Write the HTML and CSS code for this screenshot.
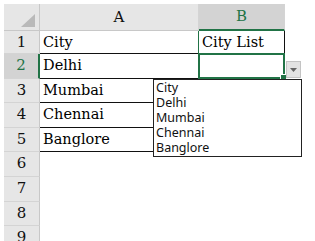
FILE: index.html
```html
<html>
<head>
  <link rel="stylesheet" href="styles.css">
</head>
<body>
<div class="sheet">
  <div class="corner">
    <svg width="14" height="13" viewBox="0 0 14 13"><polygon points="14,0 14,13 0,13" fill="#b9b9b9"/></svg>
  </div>
  <div class="colhead">A</div>
  <div class="colhead sel">B</div>

  <div class="rowhead">1</div>
  <div class="cell a top">City</div>
  <div class="cell b1">City List</div>

  <div class="rowhead sel">2</div>
  <div class="cell a">Delhi</div>
  <div class="cell b2">
    <span class="handle"></span>
    <span class="dropbtn"><svg width="7" height="4" viewBox="0 0 7 4"><polygon points="0,0 7,0 3.5,4" fill="#666"/></svg></span>
    <ul class="listbox">
      <li>City</li>
      <li>Delhi</li>
      <li>Mumbai</li>
      <li>Chennai</li>
      <li>Banglore</li>
    </ul>
  </div>

  <div class="rowhead">3</div>
  <div class="cell a">Mumbai</div>
  <div class="cell"></div>

  <div class="rowhead">4</div>
  <div class="cell a">Chennai</div>
  <div class="cell"></div>

  <div class="rowhead">5</div>
  <div class="cell a">Banglore</div>
  <div class="cell"></div>

  <div class="rowhead">6</div>
  <div class="cell"></div>
  <div class="cell"></div>

  <div class="rowhead">7</div>
  <div class="cell"></div>
  <div class="cell"></div>

  <div class="rowhead">8</div>
  <div class="cell"></div>
  <div class="cell"></div>

  <div class="rowhead">9</div>
  <div class="cell"></div>
  <div class="cell"></div>
</div>
</body>
</html>
```

FILE: styles.css
```css
html, body {
  margin: 0;
  background: #fff;
  overflow: hidden;
  font: normal 15px "DejaVu Serif", "Liberation Serif", serif;
  color: #000;
}
.sheet {
  display: grid;
  grid-template-columns: 36px 159px 86px;
  grid-template-rows: 27px 23px 25px 24px 25px 24px 25px 25px 24px 24px;
  margin: 4px 0 0 4px;
}
.sheet > div {
  box-sizing: border-box;
}
.corner {
  background: #e6e6e6;
  border-right: 1px solid #c8c8c8;
  border-bottom: 1px solid #c8c8c8;
  display: flex;
  align-items: flex-end;
  justify-content: flex-end;
  padding: 0 4px 3px 0;
}
.colhead {
  background: #e6e6e6;
  border-right: 1px solid #d4d4d4;
  border-bottom: 1px solid #c8c8c8;
  text-align: center;
  line-height: 27px;
  font-size: 15px;
  color: #111;
}
.colhead.sel {
  background: #d3d3d3;
  color: #217346;
  border-bottom: 2px solid #217346;
  line-height: 25px;
}
.rowhead {
  background: #e6e6e6;
  border-right: 1px solid #c8c8c8;
  border-bottom: 1px solid #d4d4d4;
  text-align: center;
  font-size: 15px;
  line-height: 23px;
  color: #111;
}
.rowhead.sel {
  background: #d3d3d3;
  color: #217346;
  border-right: 2px solid #217346;
}
.cell {
  position: relative;
  padding-left: 3px;
  font-size: 14.5px;
  line-height: 23px;
  white-space: nowrap;
}
.cell.a {
  border-bottom: 1px solid #111;
  border-right: 1px solid #111;
}
.cell.a.top {
  border-right-color: #217346;
}
.cell.b1 {
  border-right: 1px solid #111;
  border-bottom: 1px solid #111;
}
.cell.b2 {
  border: 2px solid #217346;
  margin: -1px 0 0 -1px;
}
.handle {
  position: absolute;
  right: -4px;
  bottom: -4px;
  width: 5px;
  height: 5px;
  background: #217346;
  border: 1px solid #fff;
}
.dropbtn {
  position: absolute;
  left: 86px;
  top: 6px;
  width: 15px;
  height: 17px;
  box-sizing: border-box;
  background: #e3e3e3;
  border: 1px solid #c4c4c4;
  display: flex;
  align-items: center;
  justify-content: center;
}
.listbox {
  position: absolute;
  left: -47px;
  top: 24px;
  width: 149px;
  height: 78px;
  box-sizing: border-box;
  margin: 0;
  padding: 0 0 0 2px;
  list-style-type: none;
  background: #fff;
  border: 1px solid #222;
  font: normal 12.5px "Noto Sans", "Open Sans", sans-serif;
  line-height: 15px;
  color: #111;
  z-index: 2;
}
```
